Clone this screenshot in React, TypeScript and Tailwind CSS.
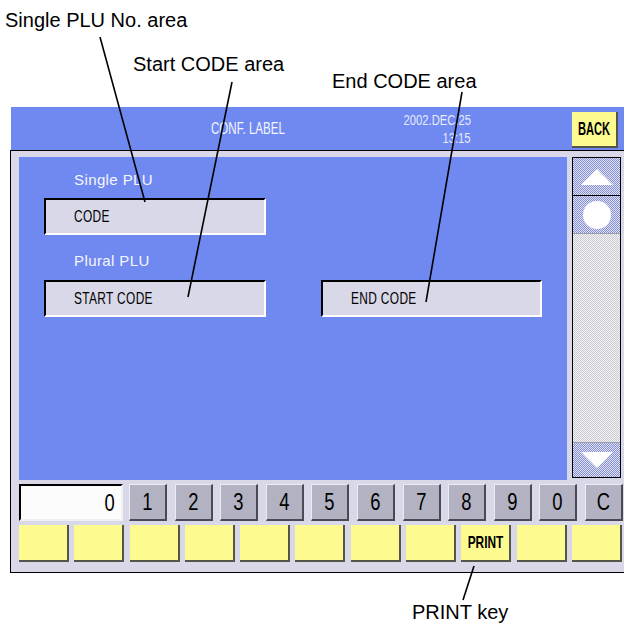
import React from "react";

const numKeys = ["1", "2", "3", "4", "5", "6", "7", "8", "9", "0", "C"];
const softKeys = ["", "", "", "", "", "", "", "", "PRINT", "", ""];

const dither =
    "bg-[image:repeating-conic-gradient(#8790d2_0_25%,#dfe2f4_0_50%)] bg-[length:2px_2px]";

function NumKey({ label }: { label: string }) {
    return (
        <div className="flex h-[37px] w-[38px] items-center justify-center border-l border-t border-b-2 border-r-2 border-l-[#ececf4] border-t-[#ececf4] border-b-[#4a4a54] border-r-[#4a4a54] bg-[#b2b2c2]">
            <span className="inline-block origin-center scale-x-[0.8] text-[23px] leading-[22px] text-black">
                {label}
            </span>
        </div>
    );
}

function SoftKey({ label }: { label: string }) {
    return (
        <div className="flex h-[37px] w-[50px] items-center justify-center border-b-2 border-r-2 border-b-[#55554a] border-r-[#55554a] bg-[#fdfb8f]">
            {label && (
                <span className="inline-block origin-center scale-x-[0.7] text-[17px] font-bold leading-[16px] text-black">
                    {label}
                </span>
            )}
        </div>
    );
}

function Field({ label, width, pl }: { label: string; width: string; pl: string }) {
    return (
        <div
            className={`flex h-[37px] items-center border-2 border-l-black border-t-black border-r-white border-b-white bg-[#d8d8e8] ${width} ${pl}`}
        >
            <span className="inline-block origin-left scale-x-[0.7] text-[17px] tracking-[0.5px] leading-[16px] text-black">
                {label}
            </span>
        </div>
    );
}

export default function App() {
    return (
        <div className="relative h-[630px] w-[624px] overflow-hidden bg-white font-['Liberation_Sans',Arial,sans-serif]">
            {/* callout labels */}
            <div className="h-[107px] pt-[8px] text-[20px] leading-[24px] text-black">
                <div className="pl-[5px]">Single PLU No. area</div>
                <div className="flex items-start pl-[133px] pt-[20px]">
                    <div className="w-[199px]">Start CODE area</div>
                    <div className="mt-[17px]">End CODE area</div>
                </div>
            </div>

            {/* title bar */}
            <div className="ml-[11px] flex h-[43px] items-center bg-[#7089f0] pl-[200px] pr-[6px]">
                <span className="inline-block origin-left scale-x-[0.68] text-[17px] leading-[16px] text-[#f4f5ff]">
                    CONF. LABEL
                </span>
                <div className="flex-1" />
                <div className="mr-[101px] flex flex-col items-end text-[15px] leading-[17.5px] text-[#e6eaff]">
                    <span className="inline-block origin-right scale-x-[0.75]">2002.DEC.25</span>
                    <span className="inline-block origin-right scale-x-[0.75]">13:15</span>
                </div>
                <div className="mt-[5px] flex h-[36px] w-[46px] items-center justify-center self-start border-b-2 border-r-2 border-b-[#55554a] border-r-[#55554a] bg-[#fdfb8f]">
                    <span className="inline-block origin-center scale-x-[0.62] text-[18px] font-bold leading-[17px] text-black">
                        BACK
                    </span>
                </div>
            </div>

            {/* screen body */}
            <div className="ml-[10px] h-[423px] border-b border-l border-t border-black bg-[#d8d8e8] pl-[8px] pt-[6px]">
                <div className="flex h-[323px] gap-[5px]">
                    <div className="w-[548px] bg-[#7089f0] pt-[15px]">
                        <div className="pl-[55px] text-[15px] tracking-[0.4px] leading-[16px] text-[#f6f6ff]">
                            Single PLU
                        </div>
                        <div className="mt-[10px] pl-[25px]">
                            <Field label="CODE" width="w-[222px]" pl="pl-[28px]" />
                        </div>
                        <div className="mt-[18px] pl-[55px] text-[15px] tracking-[0.4px] leading-[16px] text-[#f6f6ff]">
                            Plural PLU
                        </div>
                        <div className="mt-[11px] flex gap-[55px] pl-[25px]">
                            <Field label="START CODE" width="w-[222px]" pl="pl-[28px]" />
                            <Field label="END CODE" width="w-[221px]" pl="pl-[28px]" />
                        </div>
                    </div>

                    {/* scroll bar */}
                    <div className="flex h-[321px] w-[49px] flex-col border border-black bg-[#dcdce2]">
                        <div className={`flex h-[38px] items-center justify-center border-b border-black ${dither}`}>
                            <svg width="34" height="18" viewBox="0 0 34 18">
                                <path d="M17 1 L33 17 L1 17 Z" fill="#fff" />
                            </svg>
                        </div>
                        <div className={`flex h-[38px] items-center justify-center border-b border-[#9a9aa8] ${dither}`}>
                            <div className="h-[28px] w-[28px] rounded-full bg-white" />
                        </div>
                        <div className="flex-1 bg-[image:repeating-conic-gradient(#cacad2_0_25%,#f4f4f6_0_50%)] bg-[length:2px_2px]" />
                        <div className={`flex h-[35px] items-center justify-center border-t border-[#9a9aa8] ${dither}`}>
                            <svg width="34" height="18" viewBox="0 0 34 18">
                                <path d="M1 1 L33 1 L17 17 Z" fill="#fff" />
                            </svg>
                        </div>
                    </div>
                </div>

                {/* ten-key row */}
                <div className="mt-[4px] flex h-[37px] items-center">
                    <div className="flex h-[37px] w-[104px] items-center justify-end border-2 border-l-black border-t-black border-r-[#f0f0f4] border-b-[#f0f0f4] bg-[#fcfcfc] pr-[6px]">
                        <span className="inline-block origin-right scale-x-[0.8] text-[23px] leading-[22px] text-black">0</span>
                    </div>
                    <div className="ml-[6px] flex gap-[7.6px]">
                        {numKeys.map((k, i) => (
                            <NumKey key={i} label={k} />
                        ))}
                    </div>
                </div>

                {/* soft keys */}
                <div className="mt-[4px] flex gap-[5.3px]">
                    {softKeys.map((k, i) => (
                        <SoftKey key={i} label={k} />
                    ))}
                </div>
            </div>

            <div className="pl-[412px] pt-[27px] text-[20px] leading-[24px] text-black">PRINT key</div>

            {/* leader lines */}
            <svg className="pointer-events-none absolute inset-0" width="624" height="630">
                <g stroke="#000" strokeWidth="1.6" fill="none">
                    <line x1="100" y1="37" x2="145" y2="202" />
                    <line x1="232" y1="82" x2="188" y2="297" />
                    <line x1="462" y1="92" x2="426" y2="302" />
                    <line x1="474" y1="566" x2="463" y2="600" />
                </g>
            </svg>
        </div>
    );
}
